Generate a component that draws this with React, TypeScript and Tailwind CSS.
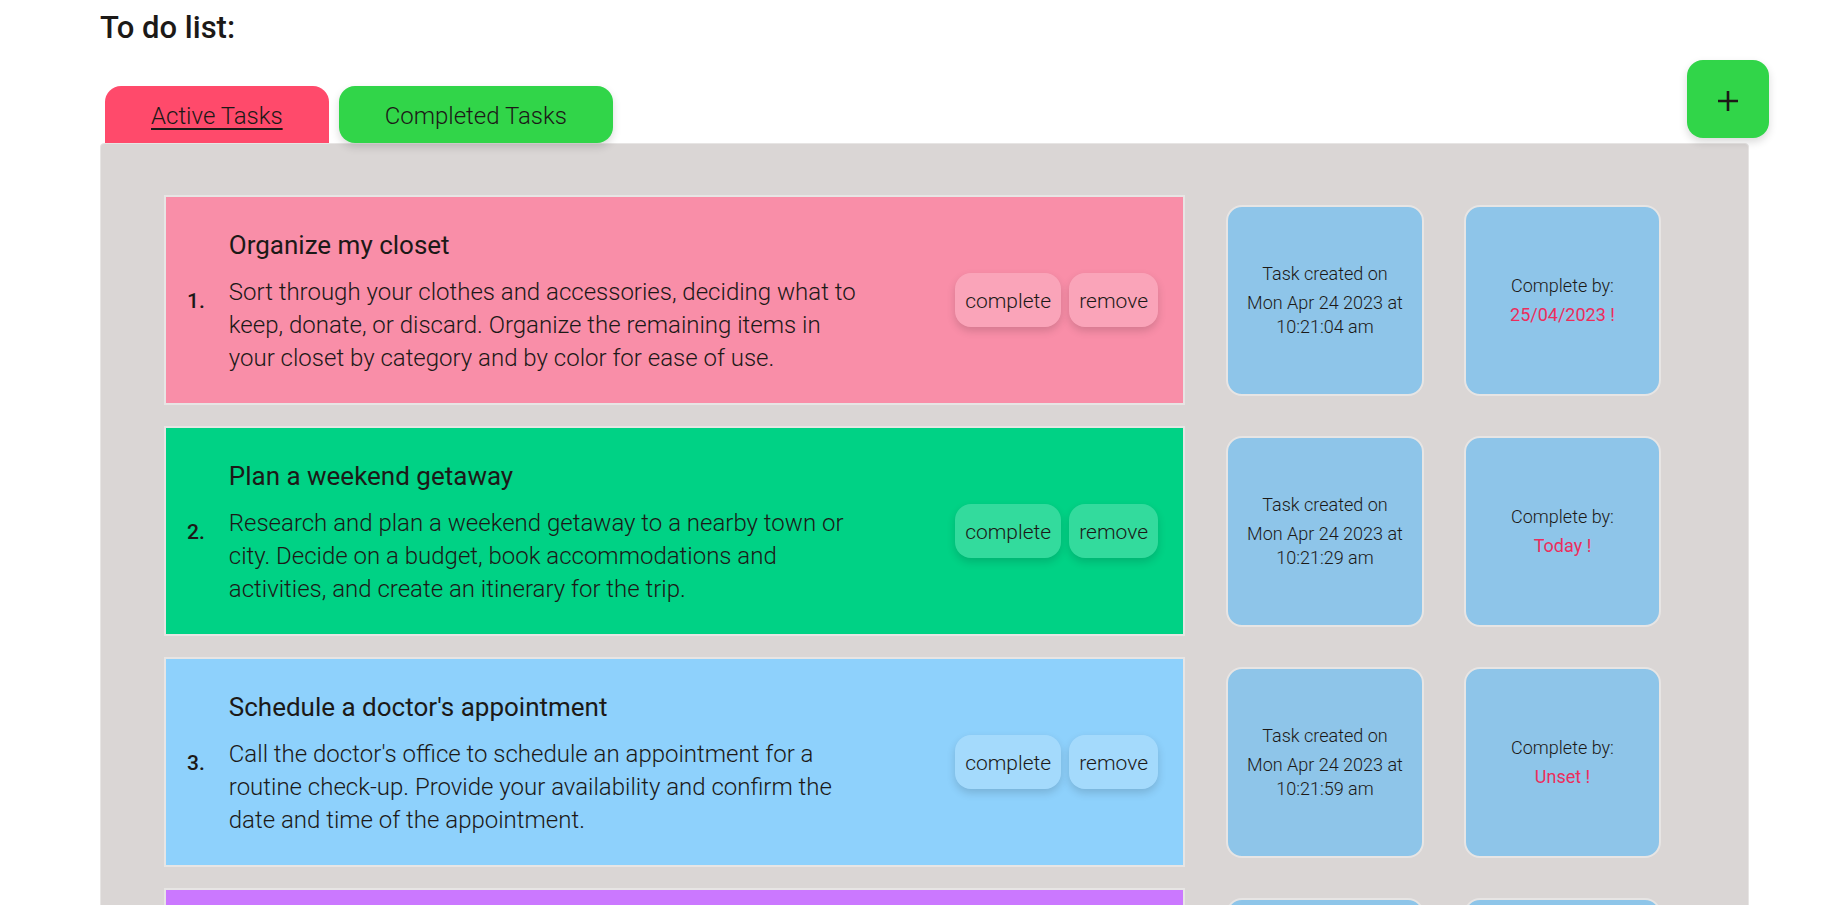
import { useState } from "react";

type Task = {
  title: string;
  lines: string[];
  color: string;
  created: string;
  due: string;
};

const tasks: Task[] = [
  {
    title: "Organize my closet",
    lines: [
      "Sort through your clothes and accessories, deciding what to",
      "keep, donate, or discard. Organize the remaining items in",
      "your closet by category and by color for ease of use.",
    ],
    color: "bg-[#f98ea8]",
    created: "10:21:04 am",
    due: "25/04/2023 !",
  },
  {
    title: "Plan a weekend getaway",
    lines: [
      "Research and plan a weekend getaway to a nearby town or",
      "city. Decide on a budget, book accommodations and",
      "activities, and create an itinerary for the trip.",
    ],
    color: "bg-[#00d285]",
    created: "10:21:29 am",
    due: "Today !",
  },
  {
    title: "Schedule a doctor's appointment",
    lines: [
      "Call the doctor's office to schedule an appointment for a",
      "routine check-up. Provide your availability and confirm the",
      "date and time of the appointment.",
    ],
    color: "bg-[#8ed1fc]",
    created: "10:21:59 am",
    due: "Unset !",
  },
];

function ActionButton({ label }: { label: string }) {
  return (
    <button
      type="button"
      className="h-[54px] cursor-pointer rounded-2xl bg-white/20 px-2.5 pt-0.5 text-[21px] leading-6 shadow-[0_4px_8px_rgba(0,0,0,0.15)]"
    >
      {label}
    </button>
  );
}

const tile =
  "flex h-[191px] shrink-0 flex-col items-center justify-center gap-[5px] rounded-2xl border-2 border-[#e7e5e4] bg-[#8ec5e9] text-center text-lg leading-6";

function TaskRow({ task, index }: { task: Task; index: number }) {
  return (
    <li className="flex items-center">
      <article
        className={`flex h-[210px] min-w-0 flex-1 items-center border-2 border-[#e7e5e4] pl-[21px] pr-[25px] ${task.color}`}
      >
        <span className="mr-6 shrink-0 pt-0.5 text-[21px] font-medium leading-7">{index + 1}.</span>
        <div className="flex min-w-0 flex-1 flex-col gap-[13px] pt-px">
          <h2 className="text-[26px] font-normal leading-9">{task.title}</h2>
          <p className="text-2xl leading-[33px]">
            {task.lines.map((line) => (
              <span key={line} className="block">
                {line}
              </span>
            ))}
          </p>
        </div>
        <div className="flex shrink-0 gap-2">
          <ActionButton label="complete" />
          <ActionButton label="remove" />
        </div>
      </article>
      <div className={`${tile} ml-[41px] w-[198px]`}>
        <p>Task created on</p>
        <p>
          Mon Apr 24 2023 at
          <br />
          {task.created}
        </p>
      </div>
      <div className={`${tile} ml-10 w-[197px]`}>
        <p>Complete by:</p>
        <p className="font-normal text-[#ec2d5c]">{task.due}</p>
      </div>
    </li>
  );
}

export default function App() {
  const [tab, setTab] = useState<"active" | "completed">("active");
  const active = tab === "active";
  const tabBase = "h-[57px] cursor-pointer px-[46px] pt-0.5 text-2xl leading-8";
  const selected = "rounded-t-2xl bg-[#ff4a6b] underline decoration-2 underline-offset-4";
  const idle = "rounded-2xl bg-[#31d549] shadow-[0_4px_8px_rgba(0,0,0,0.15)]";

  return (
    <main className="h-screen overflow-hidden bg-white pl-[100px] pr-[99px] pt-2 font-['Roboto',sans-serif] font-light text-[#1c1917]">
      <h1 className="text-[31px] font-medium leading-10">To do list:</h1>
      <div className="flex items-start justify-between pt-3">
        <div className="flex gap-2.5 pl-[5px] pt-[26px]">
          <button type="button" onClick={() => setTab("active")} className={`${tabBase} ${active ? selected : idle}`}>
            Active Tasks
          </button>
          <button
            type="button"
            onClick={() => setTab("completed")}
            className={`relative ${tabBase} ${active ? idle : selected}`}
          >
            Completed Tasks
          </button>
        </div>
        <button
          type="button"
          aria-label="Add task"
          className="relative -mr-5 flex h-[78px] w-[82px] cursor-pointer items-center justify-center rounded-2xl bg-[#31d549] pt-[3px] shadow-[0_4px_8px_rgba(0,0,0,0.15)]"
        >
          <svg viewBox="0 0 22 22" className="size-[22px]" fill="none" stroke="currentColor" strokeWidth="2.6">
            <path d="M11 1v20M1 11h20" />
          </svg>
        </button>
      </div>
      <section className="rounded border border-[#e7e5e4] bg-[#dad6d5] pb-14 pl-[63px] pr-[87px] pt-[51px]">
        <ol className="flex flex-col gap-[21px]">
          {tasks.map((task, i) => (
            <TaskRow key={task.title} task={task} index={i} />
          ))}
          <li className="flex items-center" aria-hidden="true">
            <div className="h-[210px] flex-1 border-2 border-[#e7e5e4] bg-[#cb78ff]" />
            <div className={`${tile} ml-[41px] w-[198px]`} />
            <div className={`${tile} ml-10 w-[197px]`} />
          </li>
        </ol>
      </section>
    </main>
  );
}
